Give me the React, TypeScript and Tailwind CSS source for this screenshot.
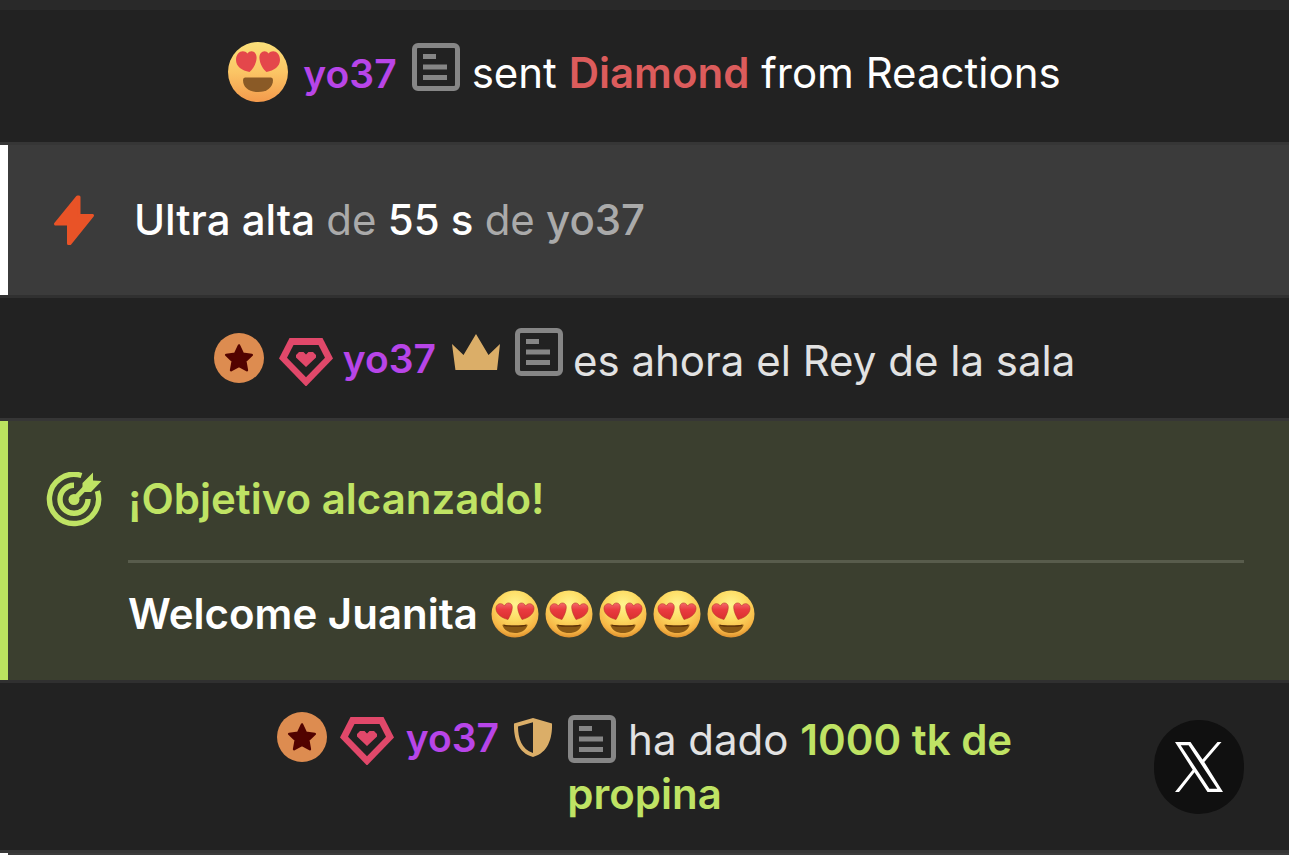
import type { ReactNode } from "react";

function LoveEmoji({ className }: { className: string }) {
  return (
    <svg viewBox="0 0 60 60" className={className} role="img" aria-label="Reaction">
      <defs>
        <linearGradient id="loveFace" x1="0" y1="0" x2="0" y2="1">
          <stop offset="0" stopColor="#fbe07a" />
          <stop offset="0.5" stopColor="#fbc565" />
          <stop offset="1" stopColor="#f49a4c" />
        </linearGradient>
      </defs>
      <circle cx="30" cy="30" r="30" fill="url(#loveFace)" />
      <path
        d="M21.500 30C14 28.500 8 24.500 8 18C8 9 16 7 19.500 11.500C22.500 7 29.500 9.500 28.500 17C28 22 25 27 21.500 30Z"
        fill="#e4474b"
      />
      <path
        d="M38.500 30C35 27 32 22 31.500 17C30.500 9.500 37.500 7 40.500 11.500C44 7 52 9 52 18C52 24.500 46 28.500 38.500 30Z"
        fill="#e4474b"
      />
      <path
        d="M17 35.500H43Q45 35.500 45 38C45 45.500 39 50 30 50S15 45.500 15 38Q15 35.500 17 35.500Z"
        fill="#8a5a26"
      />
    </svg>
  );
}

function HeartEyes() {
  return (
    <svg viewBox="0 0 48 48" className="size-12" role="img" aria-label="Heart eyes">
      <defs>
        <radialGradient id="glossFace" cx="0.5" cy="0.3" r="0.72">
          <stop offset="0" stopColor="#fff48f" />
          <stop offset="0.45" stopColor="#fddb62" />
          <stop offset="0.82" stopColor="#f6b545" />
          <stop offset="1" stopColor="#d98a2a" />
        </radialGradient>
        <linearGradient id="glossHeart" x1="0" y1="0" x2="0" y2="1">
          <stop offset="0" stopColor="#f4696a" />
          <stop offset="0.4" stopColor="#ea3b40" />
          <stop offset="1" stopColor="#d9302f" />
        </linearGradient>
      </defs>
      <circle cx="24" cy="24" r="23.500" fill="url(#glossFace)" />
      <path
        d="M17 29.500C11 28 5.500 24.500 5 19C4.500 14 10.500 11.500 13.500 16C15 11.500 21.500 12 21.300 17.500C21.200 21.500 19 26 17 29.500Z"
        fill="url(#glossHeart)"
        stroke="#b9352b"
        strokeWidth="0.600"
      />
      <path
        d="M31 29.500C29 26 26.800 21.500 26.700 17.500C26.500 12 33 11.500 34.500 16C37.500 11.500 43.500 14 43 19C42.500 24.500 37 28 31 29.500Z"
        fill="url(#glossHeart)"
        stroke="#b9352b"
        strokeWidth="0.600"
      />
      <path
        d="M12.500 34.500C16.500 35.800 31.500 35.800 35.500 34.500C36.500 34.200 36.700 35 36.300 36C34.300 40.600 30 43 24 43S13.700 40.600 11.700 36C11.300 35 11.500 34.200 12.500 34.500Z"
        fill="#8a5a15"
      />
      <path d="M13 35.300C17 36.400 31 36.400 35 35.300" stroke="#5d3208" strokeWidth="1.200" fill="none" />
    </svg>
  );
}

function NoteIcon({ className }: { className: string }) {
  return (
    <svg viewBox="0 0 48 48" className={className} aria-hidden="true">
      <rect x="2.500" y="2.500" width="43" height="43" rx="3.500" fill="none" stroke="#868686" strokeWidth="5" />
      <path d="M11 13.500H24M11 24H35M11 34.500H35" stroke="#868686" strokeWidth="5" />
    </svg>
  );
}

function StarBadge() {
  return (
    <svg viewBox="0 0 50 50" className="inline-block size-[50px] align-[-7px]" aria-hidden="true">
      <circle cx="25" cy="25" r="25" fill="#dd8c50" />
      <path
        d="M25 12.500L28.900 20.700L37.800 21.900L31.300 28.200L32.900 37.200L25 32.900L17.100 37.200L18.700 28.200L12.200 21.900L21.100 20.700Z"
        fill="#520300"
        stroke="#520300"
        strokeWidth="2.500"
        strokeLinejoin="round"
      />
    </svg>
  );
}

function GemBadge() {
  return (
    <svg viewBox="0 0 54 48" className="inline-block h-12 w-[54px] align-[-10px]" aria-hidden="true">
      <path d="M10.500 0H43.500L54 20.500L27 48.500L0 20.500Z" fill="#e1486a" />
      <path d="M14.500 7H39.500L46 19.700L27 39.200L8 19.700Z" fill="#222222" />
      <path d="M20 14H24.500L27 16.500L29.500 14H34L37 17V19.500L27 29L17 19.500V17Z" fill="#e1486a" />
    </svg>
  );
}

function CrownIcon() {
  return (
    <svg viewBox="0 0 48 36" className="mr-[15px] ml-4 inline-block h-9 w-12 align-[6px]" aria-hidden="true">
      <path d="M0 10L11.500 21L24 0L36.500 21L48 10L45 36.500H3.500Z" fill="#dbae68" />
    </svg>
  );
}

function ShieldIcon() {
  return (
    <svg viewBox="0 0 40 39" className="mr-[15px] ml-[14px] inline-block h-[39px] w-10 align-[-2px]" aria-hidden="true">
      <path
        fillRule="evenodd"
        d="M20 0L39 5.500C39.500 20 35 35 20 39C5 35 0.500 20 1 5.500ZM20 4.200L5 8.500C5 20 8.500 31.500 20 35Z"
        fill="#dbae68"
      />
    </svg>
  );
}

function BoltIcon() {
  return (
    <svg viewBox="0 0 42 52" className="h-[52px] w-[42px]" aria-hidden="true">
      <path
        d="M24.500 3L2.500 30H15.500V49.500H17L39.500 21.500H26V3Z"
        fill="#e95327"
        stroke="#e95327"
        strokeWidth="3"
        strokeLinejoin="round"
      />
    </svg>
  );
}

function TargetIcon() {
  return (
    <svg viewBox="0 0 56 56" className="size-14" aria-hidden="true">
      <g fill="none" stroke="#bfe364" strokeWidth="5.400">
        <path d="M35.500 3.500A24.600 24.600 0 1 0 51.300 19" />
        <path d="M28 13.300A14 14 0 1 0 42 27" />
      </g>
      <circle cx="28" cy="27.500" r="5.500" fill="#bfe364" />
      <path d="M28 27.500L41 14" stroke="#bfe364" strokeWidth="5" />
      <path d="M36.500 11L47 0.500V8.500L55.500 9L45 20H36.500Z" fill="#bfe364" />
    </svg>
  );
}

function XLogo() {
  return (
    <svg viewBox="0 0 48 50" className="h-[50px] w-12" aria-hidden="true">
      <path
        fillRule="evenodd"
        d="M0 0H15.500L27.500 17.500L42.500 0H46.500L29.300 20.100L48 50H32.500L19.500 30.300L4 50H0L17.700 27.700ZM5.700 3.200L34.400 46.800H42.300L13.600 3.200Z"
        fill="#ffffff"
      />
    </svg>
  );
}

function UserName({ className }: { className: string }) {
  return (
    <a href="#yo37" className={`inline-block text-[39px] leading-none font-semibold text-[#b845e8] ${className}`}>
      yo37
    </a>
  );
}

function Row({ className, children }: { className: string; children: ReactNode }) {
  return <li className={`border-b-3 border-[#363636] px-[200px] text-center ${className}`}>{children}</li>;
}

export default function App() {
  return (
    <main className="overflow-hidden bg-[#222222] font-['Inter',sans-serif] text-[42px] leading-[54px] text-[#e2e2e2]">
      <div className="h-[10px] bg-[#292929]" />
      <ul className="h-[calc(100vh-10px)] overflow-hidden">
        <Row className="pt-8 pb-10 text-white">
          <LoveEmoji className="inline-block size-[60px] align-[-14px]" />
          <UserName className="ml-[15px]" />
          <NoteIcon className="mr-3 ml-[15px] inline-block size-12 align-[-3px]" />
          sent <strong className="font-semibold text-[#dc5c5c]">Diamond</strong> from Reactions
        </Row>

        <li className="border-b-3 border-[#303030]">
          <div className="flex items-center gap-[39px] border-l-8 border-white bg-[#3b3b3b] py-12 pl-[45px] font-medium text-white">
            <BoltIcon />
            <p>
              Ultra alta <span className="font-normal text-[#aaaaaa]">de</span> 55 s{" "}
              <span className="font-normal text-[#aaaaaa]">de</span>{" "}
              <span className="text-[#aaaaaa]">yo37</span>
            </p>
          </div>
        </li>

        <Row className="py-[30px]">
          <StarBadge />
          <span className="ml-[15px]">
            <GemBadge />
          </span>
          <UserName className="ml-[10px] align-[3px]" />
          <CrownIcon />
          <NoteIcon className="mr-[10px] inline-block size-12 align-[0px]" />
          es ahora el Rey de la sala
        </Row>

        <li className="border-b-3 border-[#303030]">
          <section className="flex gap-[26px] border-l-8 border-[#bbe35f] bg-[#3b3f2f] pt-[51px] pr-[45px] pb-[39px] pl-[38px]">
            <TargetIcon />
            <div className="flex-1">
              <h2 className="font-semibold text-[#bfe364]">¡Objetivo alcanzado!</h2>
              <hr className="mt-[34px] mb-6 border-0 border-t-3 border-[#585c4c]" />
              <div className="flex items-center gap-[13px] font-semibold text-white">
                <p>Welcome Juanita</p>
                <div className="flex gap-[6px]">
                  <HeartEyes />
                  <HeartEyes />
                  <HeartEyes />
                  <HeartEyes />
                  <HeartEyes />
                </div>
              </div>
            </div>
          </section>
        </li>

        <Row className="relative py-[29px]">
          <StarBadge />
          <span className="ml-[13px]">
            <GemBadge />
          </span>
          <UserName className="ml-3 align-[3px]" />
          <ShieldIcon />
          <NoteIcon className="mr-3 inline-block size-12 align-[-8px]" />
          ha dado <strong className="font-semibold text-[#bfe364]">1000 tk de propina</strong>
          <button
            type="button"
            aria-label="X"
            className="absolute right-[45px] bottom-9 flex h-[94px] w-[90px] items-center justify-center rounded-full bg-[#101010]"
          >
            <XLogo />
          </button>
        </Row>

        <li className="h-[54px] border-l-8 border-white bg-[#3b3b3b]" />
      </ul>
    </main>
  );
}
